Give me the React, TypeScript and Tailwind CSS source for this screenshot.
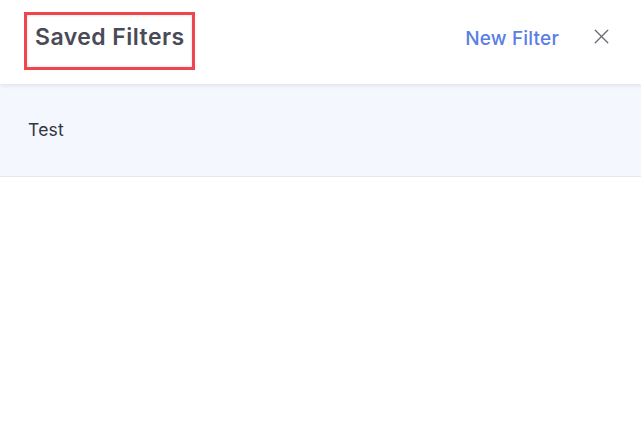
import { X } from 'lucide-react';

export default function App() {
    return (
        <div className="h-[443px] w-[641px] bg-white font-['Inter',sans-serif]">
            <div className="relative z-10 flex h-[84px] items-center justify-between pr-[27px] pl-[24px] shadow-[0_2px_4px_rgba(0,0,0,0.08)]">
                <div className="-mt-[2px] flex h-[58px] w-[171px] items-center border-[3px] border-[#f0454d] pl-[8px] shadow-[inset_0_0_3px_rgba(0,0,0,0.15)]">
                    <h1 className="-mt-[7px] text-[23px] font-semibold tracking-[0.45px] text-[#4a4a57]">
                        Saved Filters
                    </h1>
                </div>
                <div className="flex items-center gap-[30px]">
                    <button className="-mt-[5px] text-[19px] font-medium tracking-[0.2px] text-[#5a7ee3]">
                        New Filter
                    </button>
                    <X className="-mt-[12px] h-[25px] w-[25px] text-[#6b6b72]" strokeWidth={1.3} />
                </div>
            </div>
            <div className="flex h-[93px] items-center border-b border-[#e6e8ee] bg-[#f4f7fd] pl-[28px]">
                <span className="text-[17.5px] tracking-[0.2px] text-[#33363d]">Test</span>
            </div>
        </div>
    );
}
